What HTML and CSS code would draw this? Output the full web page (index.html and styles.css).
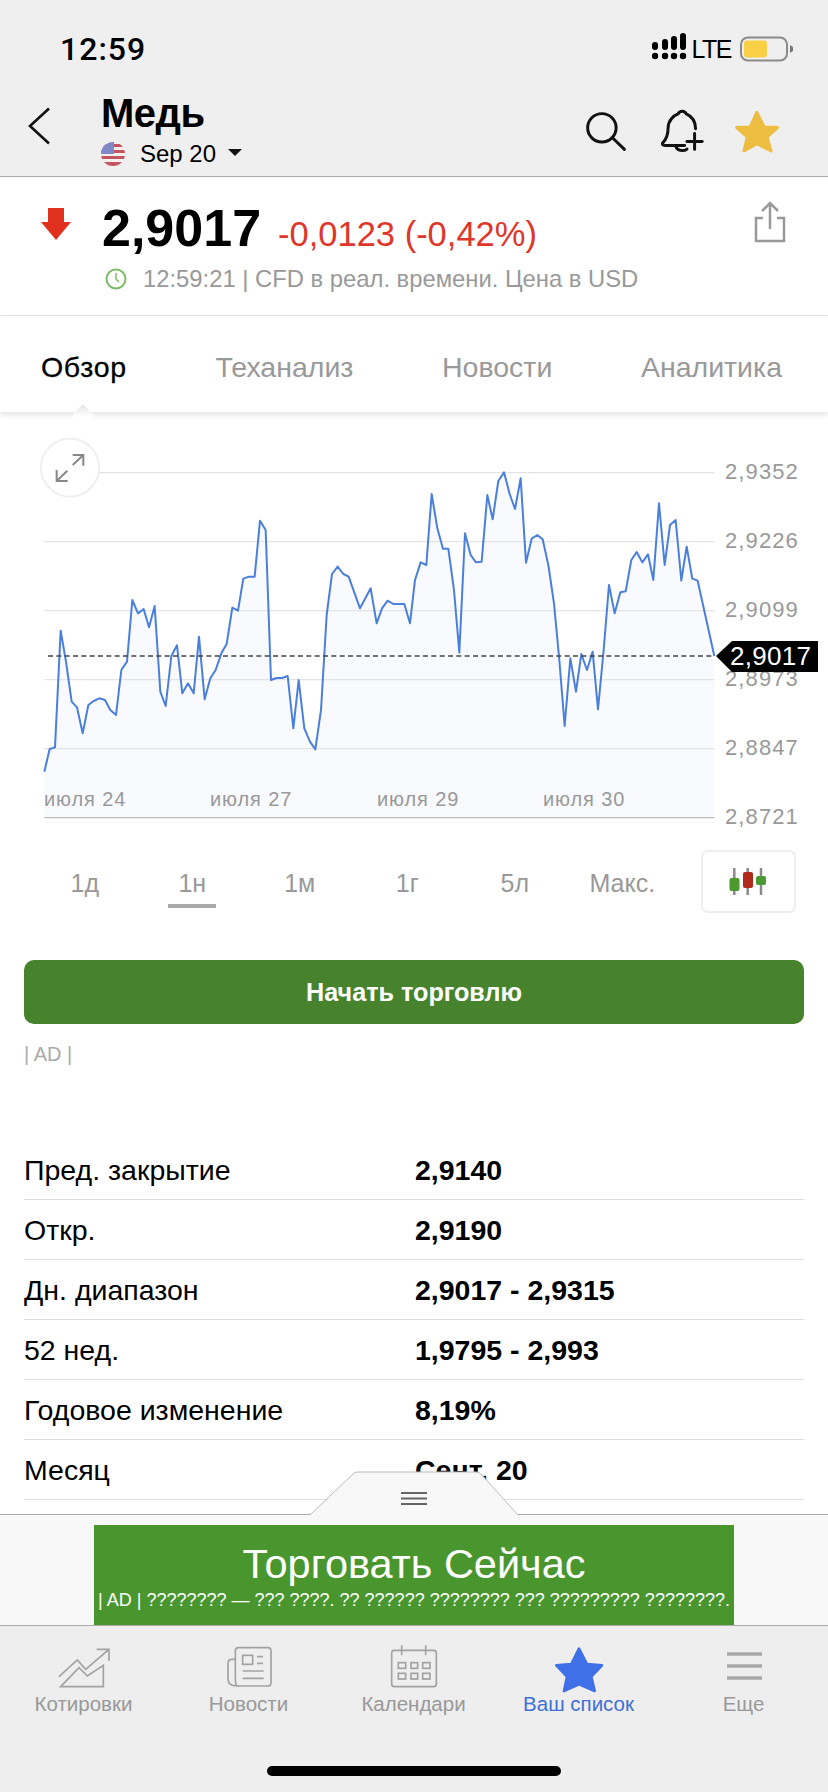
FILE: index.html
```html
<!DOCTYPE html>
<html lang="ru">
<head>
    <meta charset="UTF-8">
    <meta name="viewport" content="width=device-width, initial-scale=1.0">
    <title>Медь</title>
    <link rel="stylesheet" href="styles.css">
</head>
<body>
<div class="page">
    <header class="top">
        <div class="status">
            <span class="time">12:59</span>
            <div class="status-right">
                <svg class="signal" viewBox="0 0 36 30" width="36" height="30">
                    <circle cx="3" cy="24" r="3.2"/><circle cx="13" cy="24" r="3.2"/><circle cx="22" cy="24" r="3.2"/><circle cx="31" cy="24" r="3.2"/>
                    <rect x="0" y="10" width="6" height="8" rx="3"/><rect x="10" y="7" width="6" height="11" rx="3"/><rect x="19" y="4" width="6" height="14" rx="3"/><rect x="28" y="1" width="6" height="17" rx="3"/>
                </svg>
                <span class="lte">LTE</span>
                <svg class="battery" viewBox="0 0 54 26" width="54" height="26">
                    <rect x="1" y="1.5" width="46" height="23" rx="7" fill="none" stroke="#8a8a8a" stroke-width="2"/>
                    <rect x="4" y="4.5" width="23" height="17" rx="3" fill="#f8cf45"/>
                    <path d="M50 9l3 2v4l-3 2z" fill="#777"/>
                </svg>
            </div>
        </div>
        <div class="nav">
            <svg class="back" viewBox="0 0 24 38" width="24" height="38"><path d="M22 1.5L3 19l19 17.500" fill="none" stroke="#111" stroke-width="2.600"/></svg>
            <div class="title-block">
                <h1 class="title">Медь</h1>
                <div class="contract">
                    <svg class="flag" viewBox="0 0 24 24" width="24" height="24">
                        <defs><clipPath id="flagclip"><circle cx="12" cy="12" r="12"/></clipPath></defs>
                        <g clip-path="url(#flagclip)">
                            <rect width="24" height="24" fill="#f5f0f0"/>
                            <path d="M0 2h24v3H0zM0 8h24v3H0zM0 14h24v3H0zM0 20h24v4H0z" fill="#c4545f"/>
                            <rect width="13" height="12" fill="#8088c8"/>
                        </g>
                    </svg>
                    <span>Sep 20</span>
                    <i class="caret"></i>
                </div>
            </div>
            <svg class="nav-icons" viewBox="40 25 600 145" width="200" height="48">
                <g fill="none" stroke="#111" stroke-width="9" stroke-linecap="round">
                    <circle cx="95" cy="85" r="43"/>
                    <path d="M127 115l36 35"/>
                    <path d="M278 132C293 117 295 102 295 85C295 62 312 48 325 43C330 32 345 32 350 43C366 50 378 66 378 88"/>
                    <path d="M278 132Q276 138 286 138H345"/>
                    <path d="M318 140C322 155 342 157 352 149"/>
                    <path d="M375 102V150M352 126H398"/>
                </g>
                <polygon points="563,38 585,82 626,84 594,112 606,155 563,133 524,155 534,112 502,84 543,82" fill="#ecbd40" stroke="#ecbd40" stroke-width="9" stroke-linejoin="round"/>
            </svg>
        </div>
    </header>

    <section class="quote">
        <div class="quote-row">
            <svg class="down" viewBox="0 0 30 32" width="30" height="32"><path d="M7 0h16v14h7L15 32 0 14h7z" fill="#e0301e"/></svg>
            <span class="price">2,9017</span>
            <span class="change">-0,0123 (-0,42%)</span>
            <svg class="share" viewBox="0 0 32 42" width="32" height="42">
                <path d="M16 28V2M8 10l8-8 8 8M9 17H2v23h28V17h-7" fill="none" stroke="#999" stroke-width="2.500"/>
            </svg>
        </div>
        <div class="quote-info">
            <svg class="clock" viewBox="0 0 22 22" width="22" height="22">
                <circle cx="11" cy="11" r="9.500" fill="none" stroke="#7dbb6a" stroke-width="2"/>
                <path d="M11 5v6l3 3" fill="none" stroke="#7dbb6a" stroke-width="1.500"/>
            </svg>
            <span>12:59:21 | CFD в реал. времени. Цена в USD</span>
        </div>
    </section>

    <nav class="tabs">
        <span class="tab active">Обзор</span>
        <span class="tab">Теханализ</span>
        <span class="tab">Новости</span>
        <span class="tab">Аналитика</span>
        <i class="tab-notch"></i>
    </nav>

    <svg class="chart" viewBox="0 0 828 420" width="828" height="420">
        <g transform="scale(0.33333)">
            <polygon class="area" points="133,1055 149,987 165,982 182,632 198,725 215,845 231,862 248,940 265,855 281,843 298,835 315,840 331,870 348,885 364,750 381,725 397,540 414,580 431,567 447,622 464,558 481,815 497,858 514,708 531,676 547,820 564,790 581,820 597,650 614,838 631,775 647,750 664,700 680,672 697,563 714,572 730,476 747,470 764,470 780,302 797,330 813,780 830,774 847,774 863,768 880,925 896,780 913,925 930,965 946,988 963,870 980,585 996,462 1013,440 1030,462 1046,470 1080,565 1112,505 1130,610 1146,565 1163,542 1180,552 1213,552 1230,610 1245,480 1262,427 1279,435 1295,222 1312,325 1329,386 1345,386 1362,510 1378,698 1395,340 1412,405 1428,427 1445,425 1462,225 1478,298 1495,183 1512,157 1529,222 1545,267 1562,175 1578,428 1595,356 1612,345 1628,358 1645,435 1662,550 1678,720 1694,918 1711,715 1728,815 1744,702 1761,750 1778,695 1794,868 1811,690 1827,495 1844,580 1861,517 1877,514 1894,420 1910,396 1927,427 1944,403 1960,480 1977,250 1994,435 2010,315 2027,300 2044,482 2060,380 2077,476 2093,482 2143,708 2143,1193 133,1193"/>
            <path class="grid" d="M133 158H2143M133 365H2143M133 572H2143M133 779H2143M133 986H2143"/>
            <path class="axis" d="M133 1193H2143"/>
            <polyline class="line" points="133,1055 149,987 165,982 182,632 198,725 215,845 231,862 248,940 265,855 281,843 298,835 315,840 331,870 348,885 364,750 381,725 397,540 414,580 431,567 447,622 464,558 481,815 497,858 514,708 531,676 547,820 564,790 581,820 597,650 614,838 631,775 647,750 664,700 680,672 697,563 714,572 730,476 747,470 764,470 780,302 797,330 813,780 830,774 847,774 863,768 880,925 896,780 913,925 930,965 946,988 963,870 980,585 996,462 1013,440 1030,462 1046,470 1080,565 1112,505 1130,610 1146,565 1163,542 1180,552 1213,552 1230,610 1245,480 1262,427 1279,435 1295,222 1312,325 1329,386 1345,386 1362,510 1378,698 1395,340 1412,405 1428,427 1445,425 1462,225 1478,298 1495,183 1512,157 1529,222 1545,267 1562,175 1578,428 1595,356 1612,345 1628,358 1645,435 1662,550 1678,720 1694,918 1711,715 1728,815 1744,702 1761,750 1778,695 1794,868 1811,690 1827,495 1844,580 1861,517 1877,514 1894,420 1910,396 1927,427 1944,403 1960,480 1977,250 1994,435 2010,315 2027,300 2044,482 2060,380 2077,476 2093,482 2143,708"/>
            <path class="dash" d="M144 708H2143"/>
            <circle class="expand-bg" cx="210" cy="143" r="87"/>
            <path class="expand" d="M218 135L250 105M218 105H250V137M202 152L170 183M170 150V183H203"/>
        </g>
        <g class="ylabels">
            <text x="725" y="59">2,9352</text>
            <text x="725" y="128">2,9226</text>
            <text x="725" y="197">2,9099</text>
            <text x="725" y="266">2,8973</text>
            <text x="725" y="335">2,8847</text>
            <text x="725" y="404">2,8721</text>
        </g>
        <g class="xlabels">
            <text x="44" y="386">июля 24</text>
            <text x="210" y="386">июля 27</text>
            <text x="377" y="386">июля 29</text>
            <text x="543" y="386">июля 30</text>
        </g>
        <polygon points="716,236 732,221 818,221 818,252 732,252" fill="#000"/>
        <text class="tag" x="730" y="245">2,9017</text>
    </svg>

    <div class="periods">
        <span class="period">1д</span>
        <span class="period active"><b>1н</b></span>
        <span class="period">1м</span>
        <span class="period">1г</span>
        <span class="period">5л</span>
        <span class="period">Макс.</span>
        <div class="candle-btn">
            <svg viewBox="0 0 94 63" width="94" height="63">
                <path d="M33.300 18v27M46.700 18v27M60 18v27" stroke="#8a8a8a" stroke-width="2.500"/>
                <rect x="28.500" y="28" width="10" height="13" rx="2" fill="#4a9a30"/>
                <rect x="42" y="22" width="10" height="16" rx="2" fill="#b02a1c"/>
                <rect x="55" y="26" width="10" height="9" rx="2" fill="#4a9a30"/>
            </svg>
        </div>
    </div>

    <div class="trade-btn">Начать торговлю</div>
    <div class="ad-mark">| AD |</div>

    <div class="facts">
        <div class="fact"><span>Пред. закрытие</span><b>2,9140</b></div>
        <div class="fact"><span>Откр.</span><b>2,9190</b></div>
        <div class="fact"><span>Дн. диапазон</span><b>2,9017 - 2,9315</b></div>
        <div class="fact"><span>52 нед.</span><b>1,9795 - 2,993</b></div>
        <div class="fact"><span>Годовое изменение</span><b>8,19%</b></div>
        <div class="fact"><span>Месяц</span><b>Сент. 20</b></div>
    </div>

    <div class="dock">
        <svg class="handle" viewBox="0 0 210 45" width="210" height="45">
            <path d="M0 44L43 3Q45 1 48 1H166Q169 1 171 3L208 44V45H0z" fill="#f8f8f8"/>
            <path d="M0 44L43 3Q45 1 48 1H166Q169 1 171 3L208 44" fill="none" stroke="#bbb"/>
            <path d="M91 22H117M91 27.500H117M91 33H117" stroke="#666" stroke-width="1.800"/>
        </svg>
        <div class="sheet">
            <div class="banner">
                <div class="banner-title">Торговать Сейчас</div>
                <div class="banner-sub">| AD | ???????? — ??? ????. ?? ?????? ???????? ??? ????????? ????????.</div>
            </div>
        </div>
        <div class="tabbar">
            <div class="bar-item">
                <svg viewBox="40 24 180 156" width="60" height="52">
                    <g fill="none" stroke="#a2a2a2" stroke-width="5">
                        <path d="M55 122L110 72L135 100L205 40M168 40H205V75"/>
                        <path d="M60 152L115 95L140 120L188 88V152z"/>
                    </g>
                </svg>
                <span>Котировки</span>
            </div>
            <div class="bar-item">
                <svg viewBox="536 24 180 156" width="60" height="52">
                    <g fill="none" stroke="#a2a2a2" stroke-width="5">
                        <path d="M585 125V45Q585 35 595 35H682Q692 35 692 45V140Q692 150 682 150H590"/>
                        <path d="M585 70H575Q563 70 563 82V130Q563 150 590 150Q585 145 585 125"/>
                        <rect x="607" y="58" width="30" height="27"/>
                        <path d="M650 62H668M650 82H668M607 105H670M607 127H670"/>
                    </g>
                </svg>
                <span>Новости</span>
            </div>
            <div class="bar-item">
                <svg viewBox="9 24 180 156" width="60" height="52">
                    <g fill="none" stroke="#a2a2a2" stroke-width="5">
                        <rect x="32" y="43" width="134" height="109" rx="8"/>
                        <path d="M62 28V58M134 28V58"/>
                        <rect x="52" y="80" width="22" height="17"/><rect x="90" y="80" width="20" height="17"/><rect x="125" y="80" width="22" height="17"/>
                        <rect x="52" y="112" width="22" height="17"/><rect x="90" y="112" width="20" height="17"/><rect x="125" y="112" width="22" height="17"/>
                    </g>
                </svg>
                <span>Календари</span>
            </div>
            <div class="bar-item active">
                <svg viewBox="503 24 180 156" width="60" height="52">
                    <polygon points="593,38 617,84 662,88 630,122 640,165 593,145 548,165 557,122 525,88 570,84" fill="#4070e8" stroke="#4070e8" stroke-width="8" stroke-linejoin="round"/>
                </svg>
                <span>Ваш список</span>
            </div>
            <div class="bar-item">
                <svg viewBox="0 0 60 52" width="60" height="52">
                    <path d="M13 10H48M13 22H48M13 34H48" stroke="#a8a8a8" stroke-width="3.500"/>
                </svg>
                <span>Еще</span>
            </div>
            <i class="home-bar"></i>
        </div>
    </div>
</div>
</body>
</html>
```

FILE: styles.css
```css
* {margin: 0; padding: 0; box-sizing: border-box;}
body {
    width: 828px;
    height: 1792px;
    font-family: "Liberation Sans", Arial, sans-serif;
    color: #000;
    background: #fff;
}
.page {
    position: relative;
    width: 828px;
    height: 1792px;
    overflow: hidden;
}

/* top */
.top {
    height: 177px;
    background: #efefef;
    border-bottom: 1px solid #aaa;
}
.status {
    height: 92px;
    padding: 6px 34px 0 60px;
    display: flex;
    align-items: center;
    justify-content: space-between;
}
.time {
    font-family: Roboto, "Liberation Sans", sans-serif;
    font-size: 32px;
    font-weight: 500;
    letter-spacing: 1px;
}
.status-right {
    display: flex;
    align-items: center;
    gap: 7px;
}
.signal {margin: -4px -3px 0 0;}
.lte {
    font-size: 25px;
    letter-spacing: -1.500px;
    margin-right: 2px;
    font-weight: 500;
}
.nav {
    display: flex;
    height: 84px;
}
.back {
    margin: 15px 0 0 27px;
}
.title-block {
    margin-left: 50px;
}
.title {
    font-size: 40px;
    line-height: 44px;
    font-weight: 700;
    margin-top: -1px;
    letter-spacing: -0.500px;
}
.contract {
    display: flex;
    align-items: center;
    margin-top: 5px;
    font-size: 24px;
    height: 28px;
}
.flag {margin-right: 15px;}
.caret {
    width: 0;
    height: 0;
    margin: -4px 0 0 12px;
    border-left: 7px solid transparent;
    border-right: 7px solid transparent;
    border-top: 7px solid #111;
}
.nav-icons {
    margin: 16px 0 0 auto;
    margin-right: 45px;
}

/* quote */
.quote {
    height: 139px;
    border-bottom: 1px solid #e3e3e3;
    padding-top: 23px;
}
.quote-row {
    display: flex;
    align-items: baseline;
    padding: 0 42px 0 41px;
    height: 56px;
}
.down {
    align-self: flex-start;
    margin: 8px 31px 0 0;
}
.price {
    font-size: 52px;
    line-height: 56px;
    font-weight: 700;
}
.change {
    margin-left: 17px;
    font-size: 34.500px;
    color: #e0362a;
}
.share {
    align-self: flex-start;
    margin: 1px 0 0 auto;
}
.quote-info {
    display: flex;
    align-items: center;
    gap: 16px;
    margin-top: 8px;
    padding-left: 105px;
    font-size: 23.800px;
    color: #999;
    height: 30px;
}

/* tabs */
.tabs {
    position: relative;
    height: 96px;
    padding: 6px 46px 0 41px;
    display: flex;
    align-items: center;
    justify-content: space-between;
    font-size: 28.500px;
    color: #999;
    background: #fff;
    box-shadow: 0 3px 5px rgba(0,0,0,.1);
}
.tab.active {color: #000; letter-spacing: 0.700px; -webkit-text-stroke: 0.300px #000;}
.tab-notch {
    position: absolute;
    left: 73px;
    top: 88px;
    width: 20px;
    height: 18px;
    background: linear-gradient(#e4e4e4, #fff 70%);
    clip-path: polygon(50% 0, 100% 55%, 100% 100%, 0 100%, 0 55%);
}

/* chart */
.chart {
    display: block;
    margin-top: 8px;
}
.area {fill: #f8fafe;}
.grid {fill: none; stroke: #e4e4e4; stroke-width: 4;}
.axis {fill: none; stroke: #bdbdbd; stroke-width: 4;}
.line {fill: none; stroke: #4a7fdc; stroke-width: 6; stroke-linejoin: round;}
.dash {fill: none; stroke: #444; stroke-width: 4; stroke-dasharray: 15 10;}
.expand-bg {fill: #fff; stroke: #ededed; stroke-width: 5;}
.expand {fill: none; stroke: #888; stroke-width: 6;}
.ylabels text {font-size: 22px; letter-spacing: 1.100px; fill: #999;}
.xlabels text {font-size: 20px; letter-spacing: 0.900px; fill: #999;}
.tag {font-size: 26px; fill: #fff; letter-spacing: 0.300px;}

/* periods */
.periods {
    display: flex;
    align-items: flex-start;
    padding: 10px 0 0 31px;
    font-size: 25px;
    color: #999;
    height: 73px;
}
.period {
    width: 107.500px;
    text-align: center;
    line-height: 28px;
    margin-top: 19px;
}
.period b {
    display: inline-block;
    font-weight: 400;
    width: 48px;
    padding-bottom: 7px;
    border-bottom: 4px solid #aaa;
}
.candle-btn {
    width: 95px;
    height: 63px;
    margin-left: 25px;
    border: 2px solid #eee;
    border-radius: 7px;
}
.candle-btn svg {
    display: block;
    margin: -2px;
}

/* trade */
.trade-btn {
    margin: 47px 24px 0;
    height: 64px;
    line-height: 64px;
    background: #47832d;
    border-radius: 10px;
    color: #fff;
    font-size: 25.200px;
    font-weight: 700;
    text-align: center;
}
.ad-mark {
    margin: 18px 0 0 24px;
    font-size: 20px;
    line-height: 24px;
    color: #aaa;
}

/* table */
.facts {
    margin: 74px 24px 0;
}
.fact {
    display: flex;
    align-items: center;
    height: 60px;
    padding-top: 2px;
    border-bottom: 1px solid #ddd;
    font-size: 28.500px;
}
.fact span {width: 391px;}
.fact b {font-weight: 700;}

/* bottom */
.dock {
    position: absolute;
    left: 0;
    bottom: 0;
    width: 828px;
    height: 278px;
}
.handle {
    position: absolute;
    left: 310px;
    top: -43px;
    z-index: 1;
}
.sheet {
    height: 111px;
    padding-top: 10px;
    background: #f8f8f8;
    border-top: 1px solid #aaa;
}
.banner {
    position: relative;
    z-index: 2;
    width: 640px;
    height: 100px;
    margin: 0 auto;
    background: #4a962e;
    color: #fff;
    text-align: center;
}
.banner-title {
    padding-top: 16px;
    font-size: 41.500px;
    line-height: 46px;
}
.banner-sub {
    font-size: 18px;
    line-height: 22px;
    margin-top: 2px;
    white-space: nowrap;
}
.tabbar {
    position: relative;
    height: 167px;
    padding: 18px 0 0 1px;
    display: flex;
    background: #eee;
    border-top: 1px solid #aaa;
}
.bar-item {
    width: 165px;
    display: flex;
    flex-direction: column;
    align-items: center;
    font-size: 20.500px;
    color: #999;
}
.bar-item span {margin-top: -4px;}
.bar-item.active {color: #3f6ed6;}
.home-bar {
    position: absolute;
    left: 267px;
    top: 140px;
    width: 294px;
    height: 10px;
    border-radius: 5px;
    background: #000;
}
```
